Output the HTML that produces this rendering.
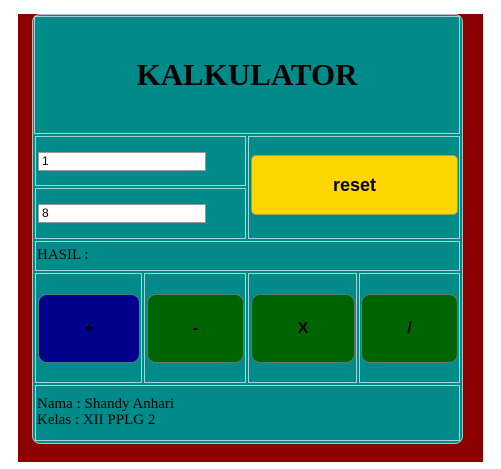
<!DOCTYPE html>
<html><head><style>
body{margin:0;width:501px;height:469px;background:#fff;position:relative;overflow:hidden;font-family:"Liberation Serif",serif}
.a{position:absolute;box-sizing:border-box}
.c{position:absolute;box-sizing:border-box;background:#008b8b;border:1px solid #a8d4d4}
.in{position:absolute;box-sizing:border-box;background:#fff;border:1px solid #999;font:12px "Liberation Sans",sans-serif;padding:1px 3px;color:#000;line-height:15px}
.b{position:absolute;box-sizing:border-box;border:1px solid #5a7a7a;border-radius:9px;font:bold 16px "Liberation Sans",sans-serif;display:flex;align-items:center;justify-content:center;color:#000}
</style></head><body>
<div class="a" style="left:18px;top:14px;width:465px;height:448px;background:#8b0000"></div>
<div class="a" style="left:32px;top:14px;width:431px;height:430px;background:#008b8b;border:1px solid #bbb;border-radius:8px"></div>
<div class="c" style="left:34px;top:16px;width:426px;height:118px"></div>
<div class="a" style="left:34px;top:57px;width:426px;text-align:center;font-weight:bold;font-size:31px">KALKULATOR</div>
<div class="c" style="left:35px;top:136px;width:211px;height:50px"></div>
<div class="c" style="left:35px;top:188px;width:211px;height:51px"></div>
<div class="c" style="left:248px;top:136px;width:212px;height:103px"></div>
<div class="in" style="left:38px;top:152px;width:168px;height:19px">1</div>
<div class="in" style="left:38px;top:204px;width:168px;height:19px">8</div>
<div class="b" style="left:251px;top:155px;width:207px;height:60px;background:#ffd700;border-color:#b0a040;border-radius:5px;font-size:18px">reset</div>
<div class="c" style="left:35px;top:241px;width:425px;height:30px"></div>
<div class="a" style="left:37px;top:247px;font-size:15px">HASIL :</div>
<div class="c" style="left:35px;top:273px;width:107px;height:110px"></div>
<div class="c" style="left:144px;top:273px;width:102px;height:110px"></div>
<div class="c" style="left:248px;top:273px;width:109px;height:110px"></div>
<div class="c" style="left:359px;top:273px;width:101px;height:110px"></div>
<div class="b" style="left:38px;top:294px;width:102px;height:69px;background:#00008b">+</div>
<div class="b" style="left:147px;top:294px;width:97px;height:69px;background:#006400">-</div>
<div class="b" style="left:251px;top:294px;width:104px;height:69px;background:#006400">X</div>
<div class="b" style="left:361px;top:294px;width:97px;height:69px;background:#006400">/</div>
<div class="c" style="left:35px;top:385px;width:425px;height:56px"></div>
<div class="a" style="left:37px;top:396px;font-size:15px;line-height:16px">Nama : Shandy Anhari<br>Kelas : XII PPLG 2</div>
</body></html>
